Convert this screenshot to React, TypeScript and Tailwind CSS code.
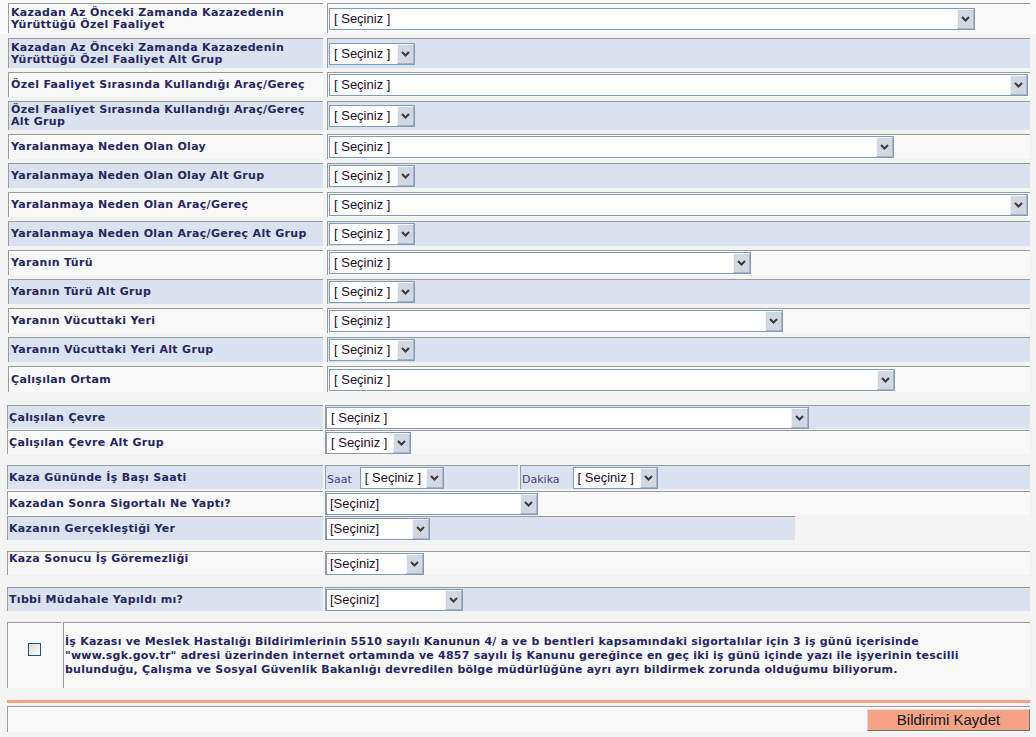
import React from "react";

const LBL = "font-['DejaVu_Sans',Verdana,sans-serif] text-[11px] font-bold tracking-[0.32px] text-[#262660] leading-[12px] whitespace-nowrap";
const B = "border-t border-l border-[#9b9b9b]";
const WH = "bg-[#f9f9f9]";
const BL = "bg-[#dbe2ef]";

function Chevron() {
  return (
    <svg width="9" height="6" viewBox="0 0 9 6">
      <polyline points="1,1 4.5,4.5 8,1" fill="none" stroke="#3a3a3a" strokeWidth="2" />
    </svg>
  );
}

function Sel({ w, text, pl }: { w: string; text: string; pl?: string }) {
  return (
    <div className={`flex h-[22px] shrink-0 border border-[#7f9db9] bg-white ${w}`}>
      <span className={`flex-1 overflow-hidden whitespace-nowrap ${pl ?? "pl-[3px]"} font-['Liberation_Sans',Arial,sans-serif] text-[13px] leading-[20px] text-[#1c0c26]`}>
        {text}
      </span>
      <span className="flex h-[20px] w-[17px] items-center justify-center border border-t-[#f4f6fa] border-l-[#f4f6fa] border-b-[#a9b2c4] border-r-[#a9b2c4] bg-[#d3d7e1]">
        <Chevron />
      </span>
    </div>
  );
}

function TopRow({ label, bg, h, sel }: { label: React.ReactNode; bg: string; h: string; sel: React.ReactNode }) {
  return (
    <div className={`flex ${h} mt-[4px]`}>
      <div className={`w-[315px] shrink-0 ${B} ${bg} flex items-center pl-[2px] ${LBL}`}>{label}</div>
      <div className={`ml-[4px] flex-1 ${B} ${bg} flex items-center pl-[1px]`}>{sel}</div>
    </div>
  );
}

function LowRow({ label, bg, mt, sel, cellW, top }: { label: React.ReactNode; bg: string; mt: string; sel: React.ReactNode; cellW?: string; top?: boolean }) {
  return (
    <div className={`flex h-[24px] ${mt}`}>
      <div className={`w-[316px] shrink-0 ${B} ${bg} flex ${top ? "items-start pt-[1px]" : "items-center"} pl-[1px] ${LBL}`}>{label}</div>
      <div className={`ml-[2px] ${cellW ?? "flex-1"} ${B} ${bg} flex items-center`}>{sel}</div>
    </div>
  );
}

export default function App() {
  const S = "[ Seçiniz ]";
  const S2 = "[Seçiniz]";
  const P = "pl-[4px]";
  return (
    <div className="min-h-[737px] w-[1036px] bg-[#f3f3f3]">
      <div className="bg-[#f9f9f9] pt-[3px] pb-[1px]">
        <div className="ml-[8px] flex h-[30px] w-[1022px]">
          <div className={`w-[315px] shrink-0 ${B} ${WH} flex items-center pl-[2px] ${LBL}`}>
            <span>Kazadan Az Önceki Zamanda Kazazedenin<br />Yürüttüğü Özel Faaliyet</span>
          </div>
          <div className={`ml-[4px] flex-1 ${B} ${WH} flex items-center pl-[1px]`}>
            <Sel w="w-[646px]" text={S} pl={P} />
          </div>
        </div>
      </div>
      <div className="ml-[8px] w-[1022px]">
        <TopRow h="h-[30px]" bg={BL} label={<span>Kazadan Az Önceki Zamanda Kazazedenin<br />Yürüttüğü Özel Faaliyet Alt Grup</span>} sel={<Sel w="w-[86px]" text={S} pl={P} />} />
        <TopRow h="h-[25px]" bg={WH} label="Özel Faaliyet Sırasında Kullandığı Araç/Gereç" sel={<Sel w="w-[699px]" text={S} pl={P} />} />
        <TopRow h="h-[29px]" bg={BL} label={<span>Özel Faaliyet Sırasında Kullandığı Araç/Gereç<br />Alt Grup</span>} sel={<Sel w="w-[86px]" text={S} pl={P} />} />
        <TopRow h="h-[25px]" bg={WH} label="Yaralanmaya Neden Olan Olay" sel={<Sel w="w-[565px]" text={S} pl={P} />} />
        <TopRow h="h-[25px]" bg={BL} label="Yaralanmaya Neden Olan Olay Alt Grup" sel={<Sel w="w-[86px]" text={S} pl={P} />} />
        <TopRow h="h-[25px]" bg={WH} label="Yaralanmaya Neden Olan Araç/Gereç" sel={<Sel w="w-[699px]" text={S} pl={P} />} />
        <TopRow h="h-[25px]" bg={BL} label="Yaralanmaya Neden Olan Araç/Gereç Alt Grup" sel={<Sel w="w-[86px]" text={S} pl={P} />} />
        <TopRow h="h-[25px]" bg={WH} label="Yaranın Türü" sel={<Sel w="w-[422px]" text={S} pl={P} />} />
        <TopRow h="h-[25px]" bg={BL} label="Yaranın Türü Alt Grup" sel={<Sel w="w-[86px]" text={S} pl={P} />} />
        <TopRow h="h-[25px]" bg={WH} label="Yaranın Vücuttaki Yeri" sel={<Sel w="w-[454px]" text={S} pl={P} />} />
        <TopRow h="h-[25px]" bg={BL} label="Yaranın Vücuttaki Yeri Alt Grup" sel={<Sel w="w-[86px]" text={S} pl={P} />} />
        <TopRow h="h-[26px]" bg={WH} label="Çalışılan Ortam" sel={<Sel w="w-[566px]" text={S} pl={P} />} />
      </div>

      <div className="ml-[7px] w-[1023px]">
        <LowRow mt="mt-[13px]" bg={BL} label="Çalışılan Çevre" sel={<Sel w="w-[483px]" text={S} pl={P} />} />
        <LowRow mt="mt-[1px]" bg={WH} label="Çalışılan Çevre Alt Grup" sel={<Sel w="w-[85px]" text={S} pl={P} />} />

        <div className="mt-[11px] flex h-[24px]">
          <div className={`w-[316px] shrink-0 ${B} ${BL} flex items-center pl-[1px] ${LBL}`}>Kaza Gününde İş Başı Saati</div>
          <div className={`ml-[2px] w-[193px] ${B} ${BL} flex items-center`}>
            <span className="mt-[6px] pl-[1px] font-['DejaVu_Sans',Verdana,sans-serif] text-[11px] text-[#4a3d8c]">Saat</span>
            <span className="ml-[8px]"><Sel w="w-[84px]" text={S} pl={P} /></span>
          </div>
          <div className={`ml-[2px] flex-1 ${B} ${BL} flex items-center`}>
            <span className="mt-[6px] pl-[1px] font-['DejaVu_Sans',Verdana,sans-serif] text-[11px] text-[#4a3d8c]">Dakika</span>
            <span className="ml-[13px]"><Sel w="w-[85px]" text={S} pl={P} /></span>
          </div>
        </div>

        <LowRow mt="mt-[2px]" bg={WH} label="Kazadan Sonra Sigortalı Ne Yaptı?" sel={<Sel w="w-[212px]" text={S2} />} />
        <LowRow mt="mt-[1px]" bg={BL} cellW="w-[470px]" label="Kazanın Gerçekleştiği Yer" sel={<Sel w="w-[104px]" text={S2} />} />
        <LowRow mt="mt-[11px]" bg={WH} top label="Kaza Sonucu İş Göremezliği" sel={<Sel w="w-[98px]" text={S2} />} />
        <LowRow mt="mt-[12px]" bg={BL} label="Tıbbi Müdahale Yapıldı mı?" sel={<Sel w="w-[137px]" text={S2} />} />

        <div className="mt-[11px] flex h-[66px]">
          <div className={`w-[54px] shrink-0 ${B} ${WH} flex justify-center pt-[20px]`}>
            <span className="block h-[13px] w-[13px] border border-[#1c5180] bg-gradient-to-br from-[#dcdcd7] to-white" />
          </div>
          <div className={`ml-[2px] flex-1 ${B} ${WH} flex items-center pl-[1px]`}>
            <p className="font-['DejaVu_Sans',Verdana,sans-serif] text-[11px] font-bold leading-[14px] tracking-[0.23px] text-[#262660] whitespace-nowrap">
              İş Kazası ve Meslek Hastalığı Bildirimlerinin 5510 sayılı Kanunun 4/ a ve b bentleri kapsamındaki sigortalılar için 3 iş günü içerisinde
              <br />
              "www.sgk.gov.tr" adresi üzerinden internet ortamında ve 4857 sayılı İş Kanunu gereğince en geç iki iş günü içinde yazı ile işyerinin tescilli
              <br />
              bulunduğu, Çalışma ve Sosyal Güvenlik Bakanlığı devredilen bölge müdürlüğüne ayrı ayrı bildirmek zorunda olduğumu biliyorum.
            </p>
          </div>
        </div>

        <div className="mt-[12px] h-[3px] w-[1023px] bg-[#f0a287]" />

        <div className={`mt-[3px] flex h-[26px] justify-end ${B} ${WH} pt-[2px]`}>
          <button className="h-[22px] w-[163px] border border-t-[#d8d8d8] border-l-[#d8d8d8] border-b-[#6f6f6f] border-r-[#6f6f6f] bg-[#f4a385] font-['Liberation_Sans',Arial,sans-serif] text-[15px] leading-[20px] text-[#16121e]">
            Bildirimi Kaydet
          </button>
        </div>
      </div>
    </div>
  );
}
